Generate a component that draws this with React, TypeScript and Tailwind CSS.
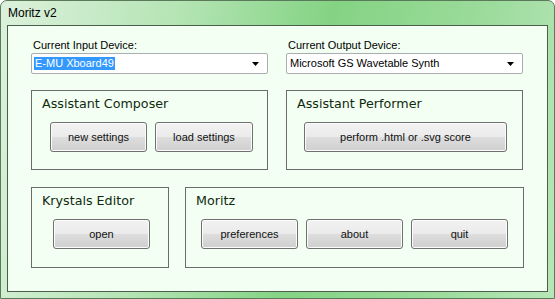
import React from 'react';

const sans = "font-['Liberation_Sans',Arial,sans-serif]";
const title = "font-['DejaVu_Sans',Verdana,sans-serif]";

const Button: React.FC<{ label: string; w?: string }> = ({ label, w = 'w-[97px]' }) => (
  <button
    className={`${w} h-[30px] rounded-[3px] border border-[#707070] bg-[linear-gradient(to_bottom,#f2f2f2_0%,#ebebeb_48%,#dddddd_52%,#cfcfcf_100%)] text-[11px] text-[#111] ${sans} shadow-[inset_0_0_0_1px_#fcfcfc]`}
  >
    {label}
  </button>
);

const Combo: React.FC<{ value: string; selected?: boolean }> = ({ value, selected }) => (
  <div className="h-[21px] border border-[#abadb3] rounded-[2px] bg-white flex items-center pl-[2px] pr-[8px]">
    <span className={`flex-1 text-[11px] leading-[13px] ${sans}`}>
      {selected ? (
        <span className="bg-[#3399ff] text-white px-[1px] inline-block">{value}</span>
      ) : (
        <span className="px-[1px] text-black">{value}</span>
      )}
    </span>
    <svg width="7" height="4" viewBox="0 0 7 4">
      <path d="M0 0h7L3.5 4z" fill="#000" />
    </svg>
  </div>
);

const Group: React.FC<{ name: string; w: string; h: string; pl: string; children: React.ReactNode }> = ({
  name,
  w,
  h,
  pl,
  children,
}) => (
  <div className={`${w} ${h} border border-[#6b6b6b] flex flex-col`}>
    <div className={`pl-[10px] pt-[5px] text-[12.7px] leading-[16px] text-[#0f2a0f] ${title}`}>{name}</div>
    <div className={`flex gap-[8px] mt-[10px] ${pl}`}>{children}</div>
  </div>
);

export default function App() {
  return (
    <div className="w-[555px] h-[299px] flex flex-col rounded-t-[7px] border border-[#5a7a5a] bg-[linear-gradient(100deg,#dcf1dc_0%,#b4e4b4_30%,#84d384_55%,#9bdb9b_80%,#b8e6b8_100%)] overflow-hidden">
      <div className={`h-[24px] pl-[7px] flex items-center text-[12px] text-black ${sans}`}>Moritz v2</div>
      <div className="mx-[6px] h-[267px] border border-[#4b5d4b] bg-[#f3fff3] pl-[23px] pt-[11px] flex flex-col">
        <div className="grid grid-cols-[237px_237px] gap-x-[18px]">
          <div>
            <div className={`h-[16px] pl-[2px] text-[11px] leading-[16px] text-black ${sans}`}>Current Input Device:</div>
            <Combo value="E-MU Xboard49" selected />
          </div>
          <div>
            <div className={`h-[16px] pl-[2px] text-[11px] leading-[16px] text-black ${sans}`}>Current Output Device:</div>
            <Combo value="Microsoft GS Wavetable Synth" />
          </div>
        </div>

        <div className="flex gap-[18px] mt-[16px]">
          <Group name="Assistant Composer" w="w-[237px]" h="h-[80px]" pl="pl-[18px]">
            <Button label="new settings" />
            <Button label="load settings" w="w-[98px]" />
          </Group>
          <Group name="Assistant Performer" w="w-[237px]" h="h-[80px]" pl="pl-[17px]">
            <Button label="perform .html or .svg score" w="w-[203px]" />
          </Group>
        </div>

        <div className="flex gap-[16px] mt-[17px]">
          <Group name="Krystals Editor" w="w-[138px]" h="h-[81px]" pl="pl-[21px]">
            <Button label="open" />
          </Group>
          <Group name="Moritz" w="w-[339px]" h="h-[81px]" pl="pl-[15px]">
            <Button label="preferences" />
            <Button label="about" />
            <Button label="quit" />
          </Group>
        </div>
      </div>
    </div>
  );
}
